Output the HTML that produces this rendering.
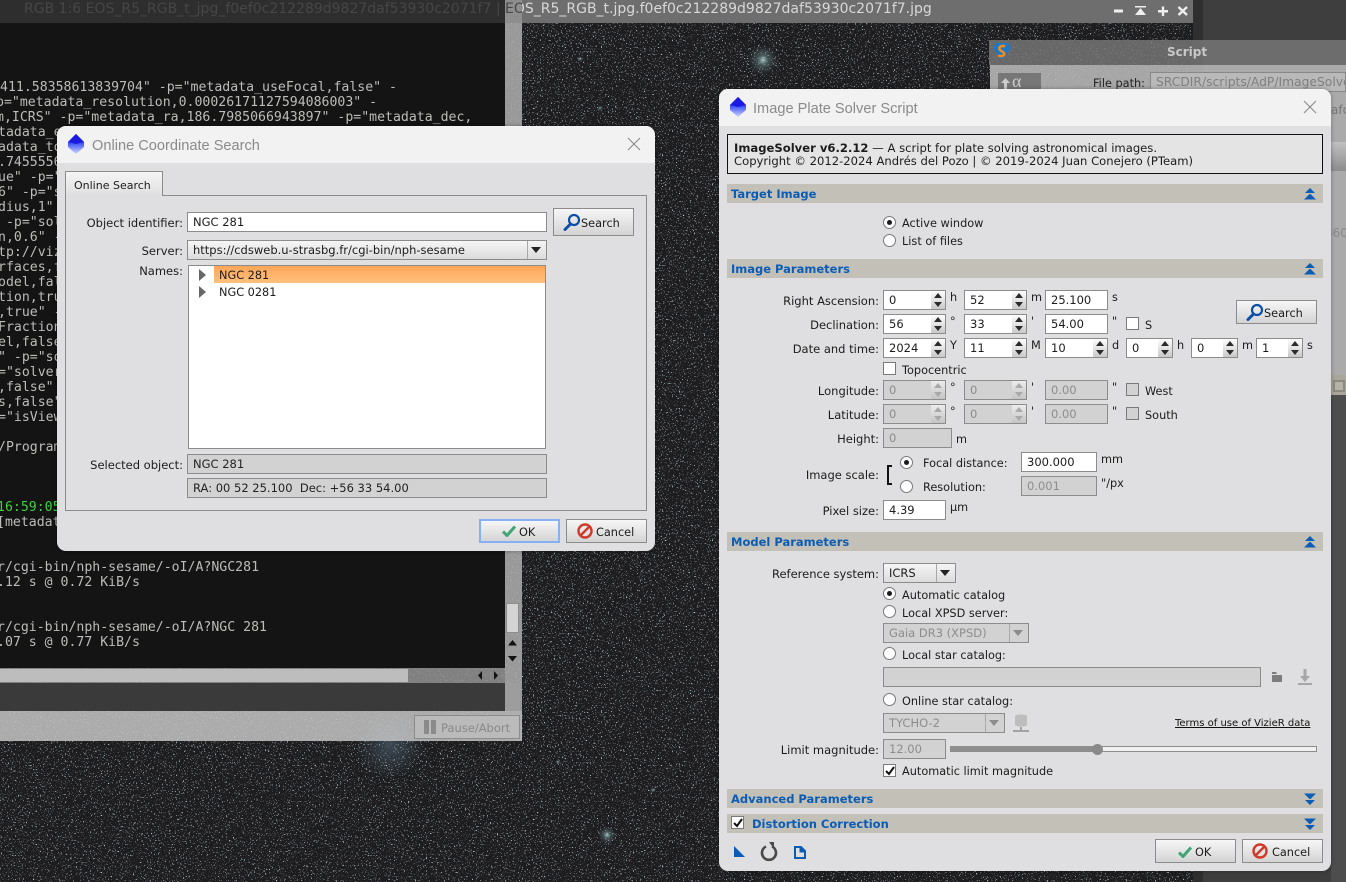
<!DOCTYPE html>
<html><head><meta charset="utf-8"><title>Image Plate Solver Script</title>
<style>
html,body{margin:0;padding:0;width:1346px;height:882px;overflow:hidden;background:#3c3c3c}
body{position:relative;font:11.3px/14px "DejaVu Sans","Liberation Sans",sans-serif;color:#1c1c1c}
div,span.a{position:absolute;box-sizing:border-box}
.t{position:absolute;white-space:nowrap;line-height:14px;margin-top:1px}
.r{position:absolute;white-space:nowrap;line-height:14px;text-align:right;font-size:11.5px}
.d{color:#8c8c8c}
.i{position:absolute;background:#fff;border:1px solid #8c8c8c;padding-left:5px;line-height:19.5px;white-space:nowrap;height:20px;font-size:11.5px}
.x{background:#d2d2d2;color:#8c8c8c}
.o{background:#d2d2d2;color:#222}
.sp{position:absolute;right:0;top:0;bottom:0;width:14px;background:linear-gradient(#fdfdfd,#e6e6e6 45%,#c8c8c8)}
.sp:before,.sp:after{content:"";position:absolute;left:3px;border-left:4px solid transparent;border-right:4px solid transparent}
.sp:before{top:2px;border-bottom:5px solid #2a2a2a}
.sp:after{bottom:2px;border-top:5px solid #2a2a2a}
.x .sp{background:linear-gradient(#ececec,#dadada 45%,#c4c4c4)}
.x .sp:before{border-bottom-color:#a8a8a8}.x .sp:after{border-top-color:#a8a8a8}
.cb{position:absolute;border-left:1px solid #a8a8a8;right:0;top:0;bottom:0;width:18px;background:linear-gradient(#f4f4f4,#dcdcdc)}
.cb:after{content:"";position:absolute;left:3px;top:6px;border-left:5px solid transparent;border-right:5px solid transparent;border-top:6px solid #222}
.x .cb{background:#d2d2d2}.x .cb:after{border-top-color:#8c8c8c}
.ra{position:absolute;width:13px;height:13px;border-radius:50%;background:#fff;border:1px solid #777}
.ra.on:after{content:"";position:absolute;left:3px;top:3px;width:5px;height:5px;border-radius:50%;background:#1a1a1a}
.c{position:absolute;width:13px;height:13px;background:#fff;border:1px solid #7a7a7a}
.c.x0{background:#d2d2d2}
.b{position:absolute;border:1px solid #8c8c8c;background:linear-gradient(#f6f6f6,#d4d4d4);line-height:25px;white-space:nowrap;height:24px}
.bar{position:absolute;left:727px;width:596px;height:19px;background:#c3c0b8}
.h{position:absolute;color:#0b5cb4;font-weight:bold;white-space:nowrap;line-height:14px;font-size:11.5px}
svg{position:absolute;overflow:visible}
.dlg{background:#dfdfe1;border-radius:9px;box-shadow:0 0 4px rgba(0,0,0,.35)}
.tb{background:#f2f2f2;border-radius:9px 9px 0 0}
.tt{position:absolute;font:14.6px/18px "Liberation Sans",sans-serif;color:#8a8a8a;white-space:nowrap}
pre{position:absolute;margin:0;font:13.2px/15px "DejaVu Sans Mono","Liberation Mono",monospace;color:#bcbcb8;white-space:pre}
</style></head><body>

<svg width="0" height="0" style="position:absolute"><defs>
<linearGradient id="cr" x1="0" y1="0" x2="0" y2="1"><stop offset="0" stop-color="#1414d8"/><stop offset=".45" stop-color="#3a50f5"/><stop offset="1" stop-color="#d0d8ff"/></linearGradient>
<symbol id="crystal" viewBox="0 0 16 20"><path d="M8 0L16 8V13L8 20L0 13V8Z" fill="url(#cr)"/><path d="M8 0L16 8L8 10L0 8Z" fill="#1a1ae0"/></symbol>
<symbol id="mag" viewBox="0 0 18 18"><circle cx="11" cy="7" r="5" fill="none" stroke="#0b4fa8" stroke-width="2.2"/><path d="M7.5 11L2 16.5" stroke="#0b4fa8" stroke-width="3" stroke-linecap="round"/></symbol>
<symbol id="ok" viewBox="0 0 14 12"><path d="M1 6.5L5 10.5L13 1.5" fill="none" stroke="#3fa574" stroke-width="3"/></symbol>
<symbol id="no" viewBox="0 0 16 16"><circle cx="8" cy="8" r="6.5" fill="none" stroke="#d0392a" stroke-width="2.4"/><path d="M12.5 3.5L3.5 12.5" stroke="#d0392a" stroke-width="2.4"/></symbol>
<symbol id="up" viewBox="0 0 12 12"><path d="M6 0L11 5H1Z" fill="#0b5cb4"/><path d="M6 5.5L12 11.5H0Z" fill="#0b5cb4"/><rect x="0" y="5" width="12" height="1" fill="#c3c0b8"/></symbol>
<symbol id="dn" viewBox="0 0 12 12"><path d="M6 12L11 7H1Z" fill="#0b5cb4"/><path d="M6 6.5L12 .5H0Z" fill="#0b5cb4"/><rect x="0" y="6" width="12" height="1" fill="#c3c0b8"/></symbol>
<filter id="st" x="0" y="0" width="100%" height="100%" color-interpolation-filters="sRGB">
<feTurbulence type="fractalNoise" baseFrequency="0.72" numOctaves="2" seed="7"/>
<feColorMatrix values="0 0 0 0 .74  0 0 0 0 .8  0 0 0 0 .82  8.500 0 0 0 -5.350"/>
</filter>
<radialGradient id="gl"><stop offset="0" stop-color="#dff" stop-opacity=".75"/><stop offset=".35" stop-color="#9cc" stop-opacity=".3"/><stop offset="1" stop-color="#8ab" stop-opacity="0"/></radialGradient>
<radialGradient id="hz"><stop offset="0" stop-color="#6d8fa8" stop-opacity=".38"/><stop offset="1" stop-color="#6d8fa8" stop-opacity="0"/></radialGradient>
</defs></svg>

<!-- star field -->
<svg style="left:0;top:0" width="1346" height="882">
<rect x="0" y="0" width="1193" height="882" fill="#1d1d1f"/>
<rect x="0" y="0" width="1193" height="882" filter="url(#st)"/>
<circle cx="763" cy="60" r="15" fill="url(#gl)"/>
<circle cx="390" cy="745" r="34" fill="url(#hz)"/>
<circle cx="607" cy="835" r="9" fill="url(#gl)"/>
<circle cx="580" cy="59" r="3" fill="url(#gl)"/>
<circle cx="558" cy="762" r="3" fill="url(#gl)"/>
<circle cx="653" cy="790" r="3" fill="url(#gl)"/>
<circle cx="600" cy="108" r="3" fill="url(#gl)"/>
<rect x="1193" y="0" width="153" height="882" fill="#3e3e3e"/>
<rect x="1193" y="0" width="10" height="882" fill="#2f2f2f"/>
</svg>

<!-- console window -->
<div style="left:0;top:711px;width:522px;height:30px;background:rgba(196,196,196,.85)"></div>
<div style="left:0;top:683px;width:520px;height:28px;background:#3a3a3a"></div>
<div style="left:505px;top:23px;width:17px;height:718px;background:rgba(175,175,175,.85)"></div>
<div style="left:0;top:668px;width:505px;height:15px;background:rgba(150,150,150,.82)"></div>
<div style="left:0;top:669px;width:408px;height:13px;background:#bdbdbd"></div>
<div style="left:0;top:23px;width:505px;height:645px;background:#141414"></div>
<div style="left:506px;top:603px;width:13px;height:30px;background:#d4d4d4;border:1px solid #8c8c8c"></div>
<svg style="left:505px;top:636px" width="15" height="30"><path d="M7.5 4L12 9.500H3Z M3 20H12L7.500 25.500Z" fill="#111"/></svg>
<svg style="left:470px;top:668px" width="40" height="15"><path d="M12 3V12L8 7.500Z M24 3V12L28 7.500Z" fill="#111"/></svg>
<div class="b" style="left:414px;top:715px;width:106px;height:24px;background:rgba(190,190,190,.8);color:#888;padding-left:26px;border-color:#8c8c8c;font-size:11.5px">Pause/Abort</div>
<div style="left:424px;top:720px;width:5px;height:14px;background:#8a8a8a"></div>
<div style="left:431px;top:720px;width:5px;height:14px;background:#8a8a8a"></div>
<pre style="left:0;top:80px;">411.58358613839704" -p="metadata_useFocal,false" -
</pre>
<pre style="left:-4px;top:95px;">p="metadata_resolution,0.00026171127594086003" -
</pre>
<pre style="left:-4px;top:110px;">m,ICRS" -p="metadata_ra,186.7985066943897" -p="metadata_dec,
</pre>
<pre style="left:-2px;top:125px;">tadata_e
adata_to
.7455556
ue" -p="
6" -p="s
dius,1"
 -p="sol
n,0.6" -
tp://viz
rfaces,f
odel,fal
tion,tru
,true" -
Fraction
el,false
" -p="so
="solver
,false"
s,false"
="isView

/Program</pre>
<pre style="left:-3px;top:500px;color:#3fd13f">16:59:05</pre>
<pre style="left:-3px;top:515px;">[metadat</pre>
<pre style="left:-3px;top:560px;">r/cgi-bin/nph-sesame/-oI/A?NGC281
.12 s @ 0.72 KiB/s


r/cgi-bin/nph-sesame/-oI/A?NGC 281
.07 s @ 0.77 KiB/s</pre>

<!-- image window title bar -->
<div style="left:0;top:0;width:505px;height:23px;background:#2e2e2e"></div>
<div style="left:505px;top:0;width:17px;height:23px;background:#8e8e8e"></div>
<div style="left:522px;top:0;width:671px;height:23px;background:#6e6e6e"></div>
<div style="left:0;top:0;width:522px;height:23px;overflow:hidden"><div class="t" style="left:24px;top:0;margin:0;font-size:14px;line-height:18px;color:#474747">RGB 1:6 EOS_R5_RGB_t_jpg_f0ef0c212289d9827daf53930c2071f7 | EOS_R5_RGB_t.jpg.f0ef0c212289d9827daf53930c2071f7.jpg</div></div>
<div style="left:522px;top:0;width:671px;height:23px;overflow:hidden"><div class="t" style="left:-498px;top:0;margin:0;font-size:14px;line-height:18px;color:#d8d8d8">RGB 1:6 EOS_R5_RGB_t_jpg_f0ef0c212289d9827daf53930c2071f7 | EOS_R5_RGB_t.jpg.f0ef0c212289d9827daf53930c2071f7.jpg</div></div>
<div style="left:0;top:0;height:2px;width:180px;overflow:hidden"><pre style="left:24px;top:-12px">Metadata version 1.5.7:</pre></div>
<svg style="left:1113px;top:5px" width="76" height="12"><path d="M1 4.500H10V7.500H1Z" fill="#eee"/><path d="M22 1H33V2.500H22Z M27.500 3L33 10H22Z" fill="#eee"/><path d="M45 5H55V7.500H45Z M48.800 1.500H51.200V11H48.800Z" fill="#eee"/><path d="M65.500 2L74 10M74 2L65.500 10" stroke="#eee" stroke-width="2.400" fill="none"/></svg>

<!-- script window behind -->
<div style="left:989px;top:40px;width:357px;height:25px;background:rgba(120,120,120,.82)"></div>
<div style="left:990px;top:65px;width:356px;height:333px;background:rgba(185,185,185,.88)"></div>
<div style="left:1331px;top:142px;width:15px;height:29px;background:linear-gradient(#c0c0c0,#8c8c8c)"></div>
<div style="left:1331px;top:375px;width:15px;height:20px;background:#aaa69a"></div>
<div style="left:1333px;top:380px;width:12px;height:12px;border:2px solid #8a8a80;background:#b5b2a8"></div>
<div style="left:1331px;top:395px;width:15px;height:487px;background:#4d4d4d"></div>
<div class="t" style="left:1167px;top:44px;font-weight:bold;font-size:12px;color:#c8c8c8">Script</div>
<svg style="left:993px;top:42px" width="18" height="19"><path d="M3 1H15L18 6L9 18L0 6Z" fill="#1c78c8"/><path d="M12 4.500C8 3 5 5 7 8C9 10 12 10 11 13C9 15 6 14 5.500 13" fill="none" stroke="#f08a1c" stroke-width="2.600"/></svg>
<div style="left:998px;top:73px;width:43px;height:17px;background:#777;color:#ccc;font:18px/16px 'Liberation Serif',serif;padding-left:14px">α</div>
<svg style="left:1001px;top:78px" width="9" height="11"><path d="M4.500 0L9 5H6V11H3V5H0Z" fill="#ccc"/></svg>
<div class="t" style="left:1093px;top:76px;color:#222">File path:</div>
<div style="left:1150px;top:72px;width:196px;height:20px;border:1px solid #888;background:#b9b9b9;color:#7f7f7f;padding-left:5px;line-height:19px;white-space:nowrap;overflow:hidden;font-size:12.300px">SRCDIR/scripts/AdP/ImageSolver.js</div>
<div class="t" style="left:1331px;top:102px;color:#777;font-size:12px;width:15px;overflow:hidden">afc</div>
<div class="t" style="left:1325px;top:225px;color:#888;font-size:12px">360</div>

<!-- Online Coordinate Search dialog -->
<div class="dlg" style="left:57px;top:126px;width:598px;height:425px"></div>
<div class="tb" style="left:57px;top:126px;width:598px;height:37px"></div>
<svg style="left:68px;top:134px" width="16" height="20"><use href="#crystal"/></svg>
<div class="tt" style="left:92px;top:137px">Online Coordinate Search</div>
<svg style="left:627px;top:137px" width="14" height="14"><path d="M1 1L13 13M13 1L1 13" stroke="#8a8a8a" stroke-width="1.100" fill="none"/></svg>

<div style="left:65px;top:195px;width:582px;height:316px;border:1px solid #8c8c8c"></div>
<div style="left:65px;top:171px;width:98px;height:25px;border:1px solid #8c8c8c;border-bottom:0;background:linear-gradient(#f5f5f5,#dfdfe1);padding-left:8px;line-height:27px;font-size:11px">Online Search</div>

<div class="r" style="right:1163px;top:216px">Object identifier:</div>
<div class="i" style="left:187px;top:212px;width:360px">NGC 281</div>
<div class="b" style="left:553px;top:208px;width:81px;height:28px;line-height:29px;padding-left:27px">Search</div>
<svg style="left:563px;top:213px" width="18" height="18"><use href="#mag"/></svg>
<div class="r" style="right:1163px;top:244px">Server:</div>
<div class="i" style="left:187px;top:240px;width:360px;background:linear-gradient(#f6f6f6,#dcdcdc)">https://cdsweb.u-strasbg.fr/cgi-bin/nph-sesame<span class="cb" style="position:absolute"></span></div>
<div class="r" style="right:1163px;top:264px">Names:</div>
<div style="left:188px;top:265px;width:358px;height:184px;background:#fff;border:1px solid #8c8c8c"></div>
<div style="left:214px;top:266px;width:331px;height:17px;background:linear-gradient(#ffa658,#ffc07e)"></div>
<div class="t" style="left:219px;top:268px">NGC 281</div>
<div class="t" style="left:219px;top:285px">NGC 0281</div>
<svg style="left:198px;top:268px" width="9" height="30"><path d="M1 1L8 7L1 13Z M1 18L8 24L1 30Z" fill="#666"/></svg>
<div class="r" style="right:1163px;top:458px">Selected object:</div>
<div class="i o" style="left:187px;top:454px;width:360px">NGC 281</div>
<div class="i o" style="left:187px;top:478px;width:360px">RA: 00 52 25.100&nbsp; Dec: +56 33 54.00</div>
<div class="b" style="left:479px;top:519px;width:81px;height:24px;border:2px solid #85b0f5;padding-left:38px;line-height:23px">OK</div>
<svg style="left:502px;top:525px" width="14" height="12"><use href="#ok"/></svg>
<div class="b" style="left:566px;top:519px;width:81px;padding-left:29px">Cancel</div>
<svg style="left:577px;top:523px" width="16" height="16"><use href="#no"/></svg>

<!-- Image Plate Solver dialog -->
<div class="dlg" style="left:719px;top:89px;width:612px;height:782px"></div>
<div class="tb" style="left:719px;top:89px;width:612px;height:37px"></div>
<svg style="left:730px;top:97px" width="16" height="20"><use href="#crystal"/></svg>
<div class="tt" style="left:753px;top:100px">Image Plate Solver Script</div>
<svg style="left:1303px;top:100px" width="14" height="14"><path d="M1 1L13 13M13 1L1 13" stroke="#8a8a8a" stroke-width="1.100" fill="none"/></svg>

<div style="left:727px;top:134px;width:596px;height:40px;border:1px solid #111;background:#e4e4e4"></div>
<div class="t" style="left:734px;top:141px;line-height:13px;font-size:11.6px"><b>ImageSolver v6.2.12</b> — A script for plate solving astronomical images.<br>Copyright © 2012-2024 Andrés del Pozo | © 2019-2024 Juan Conejero (PTeam)</div>

<div class="bar" style="top:184px"></div><div class="h" style="left:731px;top:187px">Target Image</div>
<svg style="left:1304px;top:188px" width="12" height="12"><use href="#up"/></svg>
<div class="ra on" style="left:883px;top:216px"></div><div class="t" style="left:902px;top:216px">Active window</div>
<div class="ra" style="left:883px;top:234px"></div><div class="t" style="left:902px;top:234px">List of files</div>

<div class="bar" style="top:259px"></div><div class="h" style="left:731px;top:262px">Image Parameters</div>
<svg style="left:1304px;top:263px" width="12" height="12"><use href="#up"/></svg>

<div class="r" style="right:467px;top:294px">Right Ascension:</div>
<div class="i" style="left:883px;top:290px;width:63px">0<span class="sp"></span></div><div class="t" style="left:950px;top:290px">h</div>
<div class="i" style="left:964px;top:290px;width:63px">52<span class="sp"></span></div><div class="t" style="left:1031px;top:290px">m</div>
<div class="i" style="left:1045px;top:290px;width:63px">25.100</div><div class="t" style="left:1112px;top:290px">s</div>
<div class="b" style="left:1236px;top:300px;width:81px;padding-left:27px">Search</div>
<svg style="left:1246px;top:303px" width="18" height="18"><use href="#mag"/></svg>

<div class="r" style="right:467px;top:318px">Declination:</div>
<div class="i" style="left:883px;top:314px;width:63px">56<span class="sp"></span></div><div class="t" style="left:950px;top:314px">°</div>
<div class="i" style="left:964px;top:314px;width:63px">33<span class="sp"></span></div><div class="t" style="left:1031px;top:314px">'</div>
<div class="i" style="left:1045px;top:314px;width:63px">54.00</div><div class="t" style="left:1112px;top:314px">"</div>
<div class="c" style="left:1126px;top:317px"></div><div class="t" style="left:1145px;top:318px">S</div>

<div class="r" style="right:467px;top:342px">Date and time:</div>
<div class="i" style="left:883px;top:338px;width:63px">2024<span class="sp"></span></div><div class="t" style="left:950px;top:338px">Y</div>
<div class="i" style="left:964px;top:338px;width:63px">11<span class="sp"></span></div><div class="t" style="left:1031px;top:338px">M</div>
<div class="i" style="left:1045px;top:338px;width:63px">10<span class="sp"></span></div><div class="t" style="left:1112px;top:338px">d</div>
<div class="i" style="left:1126px;top:338px;width:47px">0<span class="sp"></span></div><div class="t" style="left:1177px;top:338px">h</div>
<div class="i" style="left:1191px;top:338px;width:47px">0<span class="sp"></span></div><div class="t" style="left:1242px;top:338px">m</div>
<div class="i" style="left:1256px;top:338px;width:47px">1<span class="sp"></span></div><div class="t" style="left:1307px;top:338px">s</div>

<div class="c" style="left:883px;top:362px"></div><div class="t" style="left:902px;top:363px">Topocentric</div>

<div class="r" style="right:467px;top:384px">Longitude:</div>
<div class="i x" style="left:883px;top:380px;width:63px">0<span class="sp"></span></div><div class="t" style="left:950px;top:380px">°</div>
<div class="i x" style="left:964px;top:380px;width:63px">0<span class="sp"></span></div><div class="t" style="left:1031px;top:380px">'</div>
<div class="i x" style="left:1045px;top:380px;width:63px">0.00</div><div class="t" style="left:1112px;top:380px">"</div>
<div class="c x0" style="left:1126px;top:383px"></div><div class="t" style="left:1145px;top:384px">West</div>

<div class="r" style="right:467px;top:408px">Latitude:</div>
<div class="i x" style="left:883px;top:404px;width:63px">0<span class="sp"></span></div><div class="t" style="left:950px;top:404px">°</div>
<div class="i x" style="left:964px;top:404px;width:63px">0<span class="sp"></span></div><div class="t" style="left:1031px;top:404px">'</div>
<div class="i x" style="left:1045px;top:404px;width:63px">0.00</div><div class="t" style="left:1112px;top:404px">"</div>
<div class="c x0" style="left:1126px;top:407px"></div><div class="t" style="left:1145px;top:408px">South</div>

<div class="r" style="right:467px;top:432px">Height:</div>
<div class="i x" style="left:883px;top:428px;width:69px">0</div><div class="t" style="left:956px;top:432px">m</div>

<div class="r" style="right:467px;top:468px">Image scale:</div>
<svg style="left:886px;top:465px" width="8" height="20"><path d="M6 1H2V19H6" fill="none" stroke="#111" stroke-width="2"/></svg>
<div class="ra on" style="left:900px;top:456px"></div><div class="t" style="left:923px;top:456px">Focal distance:</div>
<div class="i" style="left:1021px;top:452px;width:76px">300.000</div><div class="t" style="left:1101px;top:452px">mm</div>
<div class="ra" style="left:900px;top:480px"></div><div class="t" style="left:923px;top:480px">Resolution:</div>
<div class="i x" style="left:1021px;top:476px;width:76px">0.001</div><div class="t" style="left:1101px;top:476px">"/px</div>

<div class="r" style="right:467px;top:504px">Pixel size:</div>
<div class="i" style="left:883px;top:500px;width:63px">4.39</div><div class="t" style="left:950px;top:500px">µm</div>

<div class="bar" style="top:532px"></div><div class="h" style="left:731px;top:535px">Model Parameters</div>
<svg style="left:1304px;top:536px" width="12" height="12"><use href="#up"/></svg>

<div class="r" style="right:467px;top:567px">Reference system:</div>
<div class="i" style="left:883px;top:563px;width:73px;background:linear-gradient(#f6f6f6,#dcdcdc)">ICRS<span class="cb"></span></div>
<div class="ra on" style="left:883px;top:587px"></div><div class="t" style="left:902px;top:588px">Automatic catalog</div>
<div class="ra" style="left:883px;top:605px"></div><div class="t" style="left:902px;top:606px">Local XPSD server:</div>
<div class="i x" style="left:883px;top:623px;width:146px">Gaia DR3 (XPSD)<span class="cb"></span></div>
<div class="ra" style="left:883px;top:647px"></div><div class="t" style="left:902px;top:648px">Local star catalog:</div>
<div class="i x" style="left:883px;top:667px;width:378px"></div>
<svg style="left:1271px;top:671px" width="12" height="12"><path d="M1 1H5L6 3H11V11H1Z" fill="#7d7d7d"/><path d="M1 3.500H11" stroke="#dfdfe1"/></svg>
<svg style="left:1298px;top:669px" width="14" height="17"><path d="M5.500 0H8.500V7H12L7 13L2 7H5.500Z M0 14H14V16H0Z" fill="#a6a6a6"/></svg>
<div class="ra" style="left:883px;top:693px"></div><div class="t" style="left:902px;top:694px">Online star catalog:</div>
<div class="i x" style="left:883px;top:713px;width:122px">TYCHO-2<span class="cb"></span></div>
<svg style="left:1013px;top:714px" width="16" height="19"><path d="M2 2C2 0 14 0 14 2V11C14 13 2 13 2 11Z" fill="#bdbdbd"/><path d="M8 13V16M0 17H16" stroke="#a2a2a2" stroke-width="2"/></svg>
<div class="t" style="left:1175px;top:716px;font-size:10px;text-decoration:underline;color:#111">Terms of use of VizieR data</div>

<div class="r" style="right:467px;top:743px">Limit magnitude:</div>
<div class="i x" style="left:883px;top:739px;width:63px">12.00</div>
<div style="left:950px;top:746px;width:367px;height:6px;border:1px solid #8c8c8c;background:#f0f0f0"></div>
<div style="left:950px;top:746px;width:147px;height:6px;background:#8e8e8e"></div>
<div style="left:1092px;top:744px;width:11px;height:11px;border-radius:50%;background:#8a8a8a"></div>
<div class="c" style="left:883px;top:764px"></div>
<svg style="left:885px;top:766px" width="10" height="10"><path d="M1 5L4 8L9 1" fill="none" stroke="#111" stroke-width="2"/></svg>
<div class="t" style="left:902px;top:764px">Automatic limit magnitude</div>

<div class="bar" style="top:789px"></div><div class="h" style="left:731px;top:792px">Advanced Parameters</div>
<svg style="left:1304px;top:793px" width="12" height="12"><use href="#dn"/></svg>
<div class="bar" style="top:814px"></div>
<div class="c" style="left:731px;top:816px"></div>
<svg style="left:733px;top:818px" width="10" height="10"><path d="M1 5L4 8L9 1" fill="none" stroke="#111" stroke-width="2"/></svg>
<div class="h" style="left:752px;top:817px">Distortion Correction</div>
<svg style="left:1304px;top:818px" width="12" height="12"><use href="#dn"/></svg>

<svg style="left:734px;top:846px" width="12" height="12"><path d="M0 0L11 11H0Z" fill="#0b5cb4"/></svg>
<svg style="left:760px;top:842px" width="18" height="19"><path d="M6 4.500A7 7 0 1 0 12 4.500" fill="none" stroke="#4a4a4a" stroke-width="2.600"/><path d="M9 0H14V7Z" fill="#4a4a4a"/></svg>
<svg style="left:794px;top:846px" width="12" height="13"><path d="M1 1H7L11 5V12H1Z" fill="none" stroke="#0b5cb4" stroke-width="2"/><path d="M6 1V6H11" fill="#0b5cb4" stroke="#0b5cb4"/></svg>

<div class="b" style="left:1155px;top:839px;width:81px;padding-left:39px">OK</div>
<svg style="left:1178px;top:846px" width="14" height="12"><use href="#ok"/></svg>
<div class="b" style="left:1242px;top:839px;width:81px;padding-left:29px">Cancel</div>
<svg style="left:1252px;top:843px" width="16" height="16"><use href="#no"/></svg>
</body></html>
